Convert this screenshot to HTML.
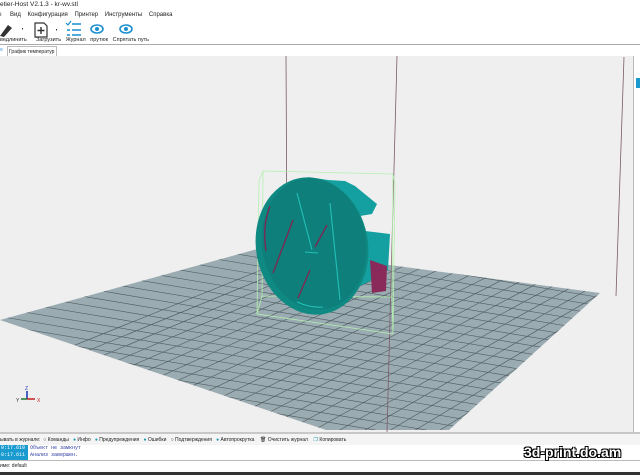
<!DOCTYPE html>
<html><head><meta charset="utf-8"><style>
*{margin:0;padding:0;box-sizing:border-box}
body{width:640px;height:475px;overflow:hidden;background:#fff;font-family:"Liberation Sans","Noto Sans CJK SC",sans-serif;font-size:6px;color:#222;position:relative}
.a{position:absolute;white-space:nowrap}
</style></head><body>
<div class="a" style="left:0;top:1px;font-size:6.5px">etier-Host V2.1.3 - kr-wv.stl</div>
<div class="a" style="left:0;top:12px;font-size:6px">ı &nbsp;&nbsp;&nbsp;&nbsp;Вид &nbsp;&nbsp;&nbsp;Конфигурация &nbsp;&nbsp;&nbsp;Принтер &nbsp;&nbsp;&nbsp;Инструменты &nbsp;&nbsp;&nbsp;Справка</div>
<svg class="a" style="left:0;top:20px" width="160" height="22">
<path d="M0 16 L8 5 L12 8 L4 17Z" fill="#333"/>
<rect x="22" y="8" width="1" height="1.5" fill="#333"/>
<path d="M35 3 h9 l3 3 v11 h-12z" fill="none" stroke="#333" stroke-width="1.2"/>
<path d="M41 7 v7 M37.5 10.5 h7" stroke="#333" stroke-width="1.4"/>
<rect x="56" y="9" width="1" height="1.5" fill="#333"/>
<path d="M66 3 l2 2 l3-4" fill="none" stroke="#1a8fd0" stroke-width="1.2"/>
<path d="M72 4 h9 M72 10 h9 M72 15 h9 M67 10 h3 M67 15 h3" stroke="#1a8fd0" stroke-width="1.6"/>
<ellipse cx="97" cy="9" rx="6" ry="4" fill="none" stroke="#1a8fd0" stroke-width="1.6"/><circle cx="97" cy="9" r="2" fill="#1a8fd0"/>
<ellipse cx="126" cy="9" rx="6" ry="4" fill="none" stroke="#1a8fd0" stroke-width="1.6"/><circle cx="126" cy="9" r="2" fill="#1a8fd0"/>
</svg>
<div class="a" style="left:0;top:37px;font-size:5.5px">ведлинить &nbsp;&nbsp;&nbsp;&nbsp;&nbsp;Загрузить &nbsp;&nbsp;Журнал &nbsp;&nbsp;прутюк &nbsp;&nbsp;Спрятать путь</div>
<div class="a" style="left:0;top:44px;width:640px;height:1px;background:#aaa"></div>
<div class="a" style="left:0;top:47px;width:5px;height:8px;font-size:5px;color:#1a8fd0">≡</div>
<div class="a" style="left:7px;top:46px;width:50px;height:10px;border:1px solid #bbb;border-bottom:none;font-size:5px;padding:2px 1px">График температур</div>
<svg class="a" style="left:0;top:56px" width="640" height="376">
<rect width="634" height="376" fill="#efefef"/>
<rect x="633" width="1" height="376" fill="#bbb"/>
<rect x="634" width="6" height="376" fill="#fff"/>
<rect x="636" y="22" width="4" height="10" fill="#1a9bd0"/>
<defs><clipPath id="g"><polygon points="0,264 261,192 600,237 449,374 326,374"/></clipPath></defs>
<polygon points="0,264 261,192 600,237 449,374 326,374" fill="#9aabb1"/>
<g clip-path="url(#g)" stroke="#4d5a60" stroke-width="0.6">
<path d="
M-300,270 L600,420 M-285,264 L615,414 M-270,258 L630,408 M-255,252 L645,402 M-240,246 L660,396 M-225,240 L675,390 M-210,234 L690,384 M-195,228 L705,378 M-180,222 L720,372 M-165,216 L735,366 M-150,210 L750,360 M-135,204 L765,354 M-120,198 L780,348 M-105,192 L795,342 M-90,186 L810,336 M-75,180 L825,330 M-60,174 L840,324 M-45,168 L855,318 M-30,162 L870,312 M-15,156 L885,306 M0,150 L900,300 M15,144 L915,294 M30,138 L930,288 M45,132 L945,282 M60,126 L960,276 M75,120 L975,270 M90,114 L990,264 M105,108 L1005,258 M120,102 L1020,252 M135,96 L1035,246 M150,90 L1050,240 M165,84 L1065,234 M180,78 L1080,228
"/>
<path d="
M-200,400 L420,150 M-178,404 L435,152 M-156,408 L450,154 M-134,412 L465,156 M-112,416 L480,158 M-90,420 L495,160 M-68,424 L510,162 M-46,428 L525,164 M-24,432 L540,166 M-2,436 L555,168 M20,440 L570,170 M42,444 L585,172 M64,448 L600,174 M86,452 L615,176 M108,456 L630,178 M130,460 L645,180 M152,464 L660,182 M174,468 L675,184 M196,472 L690,186 M218,476 L705,188 M240,480 L720,190 M262,484 L735,192 M284,488 L750,194 M306,492 L765,196 M328,496 L780,198 M350,500 L795,200 M372,504 L810,202 M394,508 L825,204 M416,512 L840,206 M438,516 L855,208 M460,520 L870,210 M482,524 L885,212 M504,528 L900,214 M526,532 L915,216 M548,536 L930,218
"/>
</g>
<path d="M286 0 L287 195 M397 0 L387 376 M624 1 L616 240" stroke="#7a5a6a" stroke-width="0.8"/>
<g fill="none" stroke="#b5f0b0" stroke-width="0.8">
<path d="M259 125 L263 115 L393 118 L395 127 L393 278 L257 258 Z M263 115 L262 240 M393 118 L392 241 L262 240 M257 258 L262 240 M393 278 L392 241"/>
</g>
<path d="M308 121 L328 124 L345 125 L355 130 L377 148 L372 158 L360 160 L365 175 L390 178 L388 214 L372 224 L360 230 Z" fill="#14a0a0"/>
<path d="M370 204 L387 210 L386 235 L372 237Z" fill="#8a2a5a"/>
<ellipse cx="312" cy="190" rx="56" ry="69" transform="rotate(-10 312 190)" fill="#0f8a82"/>
<ellipse cx="314" cy="188" rx="52" ry="66" transform="rotate(-10 314 188)" fill="#0e7f7a"/>
<g stroke="#7a2a55" stroke-width="1.4" fill="none">
<path d="M293 164 L273 217 M327 169 L315 191 M310 214 L298 242 M270 150 Q262 170 266 195"/>
</g>
<g stroke="#22c0b8" stroke-width="1.1" fill="none">
<path d="M297 137 L312 194 M330 147 L340 244 M305 196 L318 197 M297 246 Q310 252 323 251"/>
</g>
<path d="M27 343 V335" stroke="#1533b0" stroke-width="1.5"/>
<path d="M27 343 H35" stroke="#c02020" stroke-width="1.5"/>
<path d="M27 343 H21" stroke="#1a7a2a" stroke-width="1.5"/>
<text x="25" y="334" font-size="5" fill="#1533b0" font-family="Liberation Sans">Z</text>
<text x="16" y="346" font-size="5" fill="#333" font-family="Liberation Sans">Y</text>
<text x="37" y="346" font-size="5" fill="#c02020" font-family="Liberation Sans">X</text>
</svg>
<div class="a" style="left:0;top:432px;width:640px;height:2px;background:#c8c8c8"></div>
<div class="a" style="left:0;top:434px;width:640px;height:11px;background:#f4f4f4;font-size:5px;padding-top:3px;overflow:hidden">
ывать в журнале: &nbsp;<span style="color:#333">○</span> Команды &nbsp;&nbsp;<span style="color:#1a9bb0">●</span> Инфо &nbsp;&nbsp;<span style="color:#1a9bb0">●</span> Предупреждения &nbsp;&nbsp;<span style="color:#1a9bb0">●</span> Ошибки &nbsp;&nbsp;○ Подтверждения &nbsp;&nbsp;<span style="color:#1a9bb0">●</span> Автопрокрутка &nbsp;&nbsp;&nbsp;🗑 Очистить журнал &nbsp;&nbsp;&nbsp;<span style="color:#1a9bb0">❐</span> Копировать</div>
<div class="a" style="left:0;top:445px;width:28px;height:15px;background:#1a9bd0;color:#fff;font-family:'Liberation Mono',monospace;font-size:5px;line-height:7px;padding-left:1px">0:17.610<br>0:17.611</div>
<div class="a" style="left:30px;top:445px;color:#2a3aa0;font-family:'Liberation Mono',monospace;font-size:5px;line-height:7px">Объект не замкнут<br>Анализ завершен.</div>
<div class="a" style="left:0;top:460px;width:640px;height:1px;background:#bbb"></div>
<div class="a" style="left:0;top:463px;font-size:5px">име: default</div>
<div class="a" style="left:0;top:472px;width:640px;height:3px;background:#333"></div>
<div class="a" style="left:524px;top:444px;font-size:14px;line-height:16px;font-weight:bold;color:#fff;text-shadow:1px 1px 0 #000,-1px -1px 0 #000,1px -1px 0 #000,-1px 1px 0 #000">3d-print.do.am</div>
</body></html>
